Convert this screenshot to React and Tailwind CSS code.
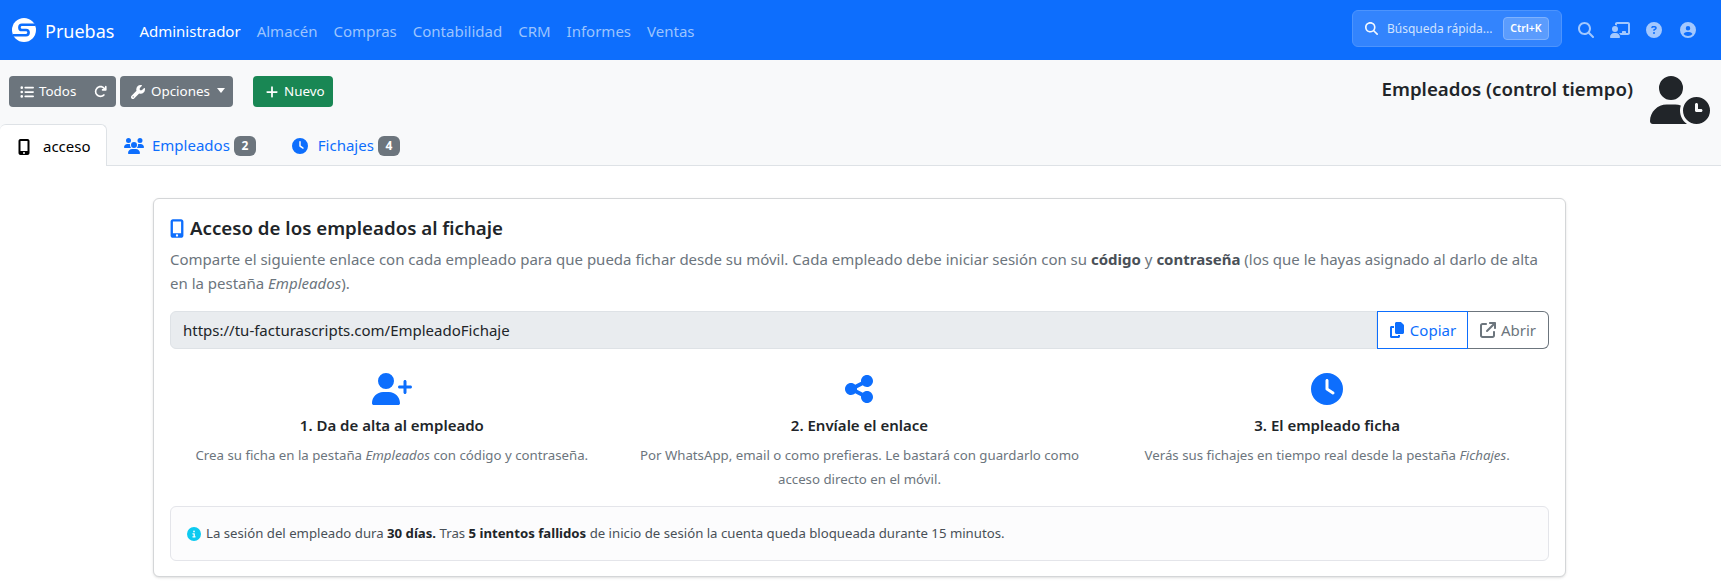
import { FaListUl, FaArrowRotateRight, FaWrench, FaPlus, FaMobileScreenButton, FaUsers, FaClock, FaUserPlus, FaShareNodes, FaCircleInfo, FaCopy, FaArrowUpRightFromSquare, FaMagnifyingGlass, FaChalkboardUser, FaCircleQuestion, FaCircleUser, FaUserClock } from 'react-icons/fa6';

const navItems = [
  { label: 'Administrador', active: true },
  { label: 'Almacén' },
  { label: 'Compras' },
  { label: 'Contabilidad' },
  { label: 'CRM' },
  { label: 'Informes' },
  { label: 'Ventas' },
];

function Logo() {
  return (
    <svg width="24" height="24" viewBox="0 0 24 24">
      <circle cx="12" cy="12" r="12" fill="#fff" />
      <path d="M23 6.8H10a2.6 2.6 0 0 0 0 5.2h4a2.6 2.6 0 0 1 0 5.2H1" fill="none" stroke="#0d6efd" strokeWidth="2.6" />
    </svg>
  );
}

function TopBar() {
  return (
    <nav className="flex h-[60px] items-center bg-[#0d6efd] pl-3 pr-[25px]">
      <Logo />
      <span className="ml-[9px] mr-[25px] pt-[3px] text-[18px] text-white">Pruebas</span>
      <div className="flex gap-4 pt-[3px] text-[15px]">
        {navItems.map(item => (
          <span key={item.label} className={item.active ? 'text-white' : 'text-[#9cc4fe]'}>{item.label}</span>
        ))}
      </div>
      <div className="ml-auto flex items-center">
        <div className="-mt-[3px] flex h-[37px] w-[210px] items-center rounded-md border border-[#4d94fd] bg-[#3384fd] pl-3 pr-3">
          <FaMagnifyingGlass className="text-[13px] text-[#f3f8ff]" />
          <span className="ml-[9px] text-[12px] text-[#cfe2ff]">Búsqueda rápida...</span>
          <span className="ml-auto flex h-[23px] w-[46px] items-center justify-center rounded border border-[#7fb2fe] bg-[#5b9cfd] text-[10.5px] font-semibold text-white">Ctrl+K</span>
        </div>
        <div className="ml-[16px] flex items-center text-[#a3c8fe]">
          <FaMagnifyingGlass className="text-[16px]" />
          <FaChalkboardUser className="ml-[16px] text-[20px]" />
          <FaCircleQuestion className="ml-[16px] text-[16px]" />
          <FaCircleUser className="ml-[18px] text-[16px]" />
        </div>
      </div>
    </nav>
  );
}

function Toolbar() {
  return (
    <div className="flex h-[64px] items-start justify-between pl-[9px] pr-[11px] pt-4">
      <div className="flex text-[13.4px] text-white">
        <div className="flex h-[31px] w-[107px] items-center rounded bg-[#6c757d] pl-[11px] pr-[9px]">
          <FaListUl className="text-[14px]" />
          <span className="ml-[5px]">Todos</span>
          <FaArrowRotateRight className="ml-auto text-[13px]" />
        </div>
        <div className="ml-1 flex h-[31px] w-[113px] items-center rounded bg-[#6c757d] pl-[11px]">
          <FaWrench className="text-[14px]" />
          <span className="ml-[6px]">Opciones</span>
          <span className="ml-[7px] mb-[2px] h-0 w-0 border-x-[4px] border-t-[5px] border-x-transparent border-t-white" />
        </div>
        <div className="ml-5 flex h-[31px] w-[80px] items-center rounded bg-[#198754] pl-3">
          <FaPlus className="text-[14px]" />
          <span className="ml-[5px]">Nuevo</span>
        </div>
      </div>
      <div className="flex items-start">
        <h1 className="-mt-[1px] text-[18.7px] leading-[28px] font-semibold text-[#212529]">Empleados (control tiempo)</h1>
        <FaUserClock className="-mt-[6px] ml-[17px] text-[60px] text-[#212529]" />
      </div>
    </div>
  );
}

function Badge({ children }) {
  return (
    <span className="ml-1 flex h-5 w-[22px] items-center justify-center rounded-md bg-[#6c757d] text-[12px] font-bold text-white">{children}</span>
  );
}

function Tabs() {
  return (
    <div className="flex h-[42px] border-b border-[#dee2e6] text-[15px]">
      <div className="-mb-px flex h-[42px] w-[107px] items-center rounded-t-md border border-b-0 border-l-0 border-[#dee2e6] bg-white pl-[18px] pt-[2px] text-black">
        <FaMobileScreenButton className="h-4 w-3" />
        <span className="ml-[13px]">acceso</span>
      </div>
      <div className="ml-[17px] flex items-center pt-[2px] text-[#0d6efd]">
        <FaUsers className="text-[20px]" />
        <span className="ml-2">Empleados</span>
        <Badge>2</Badge>
      </div>
      <div className="ml-[36px] flex items-center pt-[2px] text-[#0d6efd]">
        <FaClock className="text-[16px]" />
        <span className="ml-[10px]">Fichajes</span>
        <Badge>4</Badge>
      </div>
    </div>
  );
}

function Step({ icon, title, children }) {
  return (
    <div className="flex flex-col items-center text-center">
      <div className="flex h-[32px] items-center text-[#0d6efd]">{icon}</div>
      <h3 className="mt-2 text-[15px] leading-[24px] font-semibold text-[#212529]">{title}</h3>
      <p className="mt-[6px] text-[13.25px] leading-[24px] text-[#6c757d]">{children}</p>
    </div>
  );
}

function AccessCard() {
  return (
    <div className="ml-[153px] mt-[32px] h-[379px] w-[1413px] rounded-md border border-[#d4d6d8] bg-white px-4 pt-[15px] shadow-sm">
      <h2 className="flex items-center text-[18.7px] leading-[28px] font-semibold text-[#212529]">
        <FaMobileScreenButton className="mr-[6px] h-[19px] w-[14px] text-[#0d6efd]" />
        Acceso de los empleados al fichaje
      </h2>
      <p className="mt-[5px] text-[15px] leading-[24px] text-[#6c757d]">
        Comparte el siguiente enlace con cada empleado para que pueda fichar desde su móvil. Cada empleado debe iniciar sesión con su <strong className="font-bold text-[#495057]">código</strong> y <strong className="font-bold text-[#495057]">contraseña</strong> (los que le hayas asignado al darlo de alta en la pestaña <em>Empleados</em>).
      </p>
      <div className="mt-4 flex h-[38px] text-[15px]">
        <div className="flex flex-1 items-center rounded-l-md border border-[#dee2e6] bg-[#e9ecef] pl-3 text-[#212529]">https://tu-facturascripts.com/EmpleadoFichaje</div>
        <div className="flex w-[91px] items-center justify-center gap-[5px] border border-[#0d6efd] text-[#0d6efd]">
          <FaCopy className="text-[16px]" />Copiar
        </div>
        <div className="flex w-[81px] items-center justify-center gap-[5px] rounded-r-md border border-l-0 border-[#6c757d] text-[#6c757d]">
          <FaArrowUpRightFromSquare className="text-[16px]" />Abrir
        </div>
      </div>
      <div className="mx-[-12px] mt-[24px] grid grid-cols-3">
        <Step icon={<FaUserPlus className="text-[40px]" />} title="1. Da de alta al empleado">
          Crea su ficha en la pestaña <em>Empleados</em> con código y contraseña.
        </Step>
        <Step icon={<FaShareNodes className="text-[32px]" />} title="2. Envíale el enlace">
          Por WhatsApp, email o como prefieras. Le bastará con guardarlo como<br />acceso directo en el móvil.
        </Step>
        <Step icon={<FaClock className="text-[32px]" />} title="3. El empleado ficha">
          Verás sus fichajes en tiempo real desde la pestaña <em>Fichajes</em>.
        </Step>
      </div>
      <div className="mt-[15px] flex h-[55px] items-center rounded-md border border-[#e4e5ea] bg-[#fcfcfd] pl-4 pt-[1px] text-[13.2px] text-[#495057]">
        <FaCircleInfo className="mr-[5px] text-[14px] text-[#0dcaf0]" />
        <span>La sesión del empleado dura <strong className="text-[#212529]">30 días.</strong> Tras <strong className="text-[#212529]">5 intentos fallidos</strong> de inicio de sesión la cuenta queda bloqueada durante 15 minutos.</span>
      </div>
    </div>
  );
}

export default function App() {
  return (
    <div className="min-h-screen bg-white font-['Noto_Sans',sans-serif]">
      <TopBar />
      <div className="h-[106px] bg-[#f8f9fa]">
        <Toolbar />
        <Tabs />
      </div>
      <AccessCard />
    </div>
  );
}
